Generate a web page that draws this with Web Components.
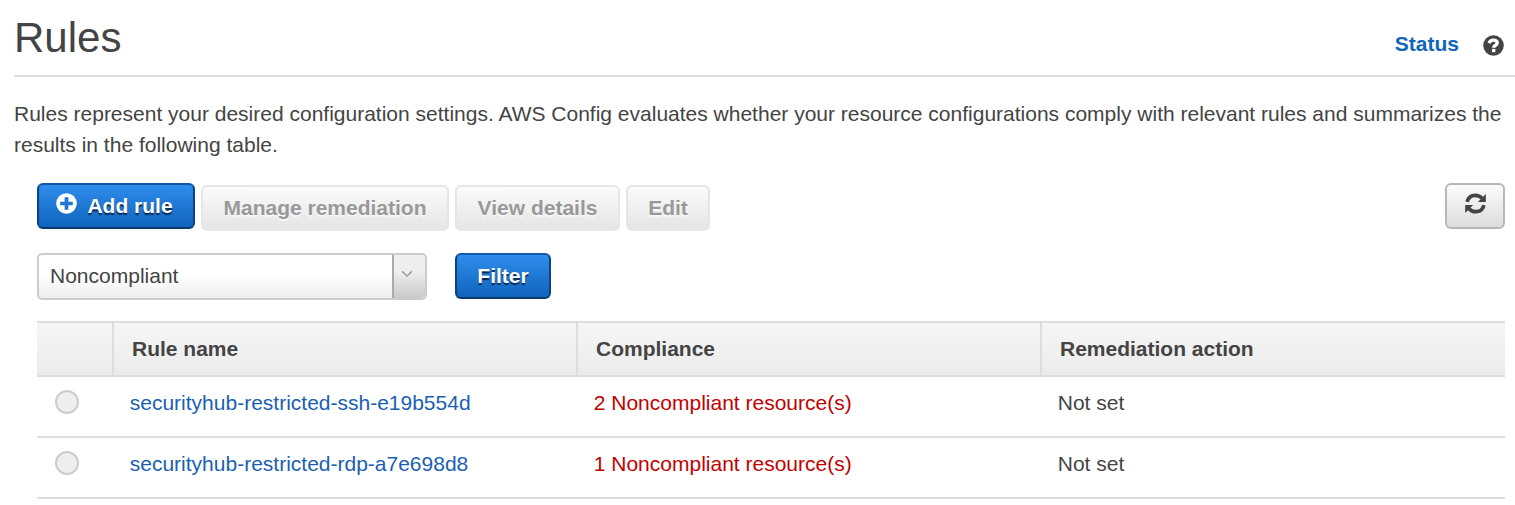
<!DOCTYPE html>
<html lang="en">
<head>
<meta charset="utf-8">
<title>Rules</title>
<style>
html,body{margin:0;background:#fff;overflow:hidden}
body{font:21px/31px "Liberation Sans",Arial,sans-serif;color:#444;height:505px}
</style>
</head>
<body>
<rules-page></rules-page>
<script>
const define = (name, html) => {
  const template = document.createElement('template');
  template.innerHTML = html;
  customElements.define(name, class extends HTMLElement {
    constructor() {
      super();
      this.attachShadow({mode: 'open'}).append(template.content.cloneNode(true));
    }
  });
};

define('page-header', `<style>
:host{display:flex;box-sizing:border-box;height:77px;margin-left:14px;border-bottom:2px solid #ddd;justify-content:space-between}
h1{margin:0;font-size:42px;font-weight:400;line-height:48px;padding-top:14px}
.side{display:flex;padding:28px 11px 0 0;gap:24px}
a{font-weight:700;color:#1166bb}
svg{display:block;margin-top:7px}
</style>
<h1><slot></slot></h1>
<div class="side"><a>Status</a>
<svg width="21" height="21" viewBox="0 0 21 21"><circle cx="10.5" cy="10.5" r="10.3" fill="#444"/><path d="M6 8.1C6.8 6.1 8.2 5.1 10.3 5.1c2.3 0 3.9 1.1 3.9 2.8 0 2.4-3.5 2.3-3.5 4.9" fill="none" stroke="#fff" stroke-width="3.4"/><rect x="9" y="13.9" width="3.4" height="3.3" fill="#fff"/></svg></div>`);

define('aws-button', `<style>
:host{display:block}
button{box-sizing:border-box;display:flex;align-items:flex-start;justify-content:center;width:100%;height:46px;margin:0;padding:7px 0 0;border:2px solid #e6e6e6;border-radius:6px;background:linear-gradient(#fbfbfb,#e5e5e5);color:#999;font:700 21px/28px "Liberation Sans",Arial,sans-serif;text-shadow:0 2px 1px #f8f8f8;white-space:nowrap}
:host([kind=primary]) button{border-color:#1159a6 #0a437f #083a70;background:linear-gradient(#2f8cec,#1064bc);color:#fff;text-shadow:0 2px 1px #06294f}
:host([kind=icon]) button{border-color:#b7b7b7;background:linear-gradient(#fbfbfb,#ddd);color:#444}
</style><button><slot></slot></button>`);

define('plus-icon', `<style>:host{display:block;width:21px;height:21px;margin:1px 10px 0 -3px}svg{display:block}</style>
<svg width="21" height="21" viewBox="0 0 21 21"><circle cx="10.5" cy="10.5" r="10.3" fill="#fff"/><path d="M10.5 4.2v12.6M4.2 10.5h12.6" stroke="#1d76d2" stroke-width="3.7"/></svg>`);

define('refresh-icon', `<style>:host{display:block;margin-top:1px}svg{display:block}</style>
<svg width="21" height="21" viewBox="0 0 21 21"><path d="M2.1 8.9C3.1 4.7 6.2 2.3 10.3 2.3c2.8 0 4.9 1 6.7 3" fill="none" stroke="#444" stroke-width="3.7"/><path d="M20.8 1v7.9h-7.9z" fill="#444"/><path d="M18.9 12.1c-1 4.2-4.1 6.6-8.2 6.6-2.8 0-4.9-1-6.7-3" fill="none" stroke="#444" stroke-width="3.7"/><path d="M.2 20v-7.9h7.9z" fill="#444"/></svg>`);

define('aws-select', `<style>
:host{display:flex;box-sizing:border-box;width:390px;height:47px;border:2px solid #ccc;border-radius:5px;background:linear-gradient(#fff 50%,#ececec);overflow:hidden}
span{flex:1;padding:5px 0 0 11px}
i{box-sizing:border-box;width:33px;border-left:2px solid #aaa;border-radius:0 4px 4px 0;background:linear-gradient(#eee 40%,#c8c8c8)}
svg{display:block;margin:15px 0 0 7px}
</style><span><slot></slot></span><i><svg width="12" height="8" viewBox="0 0 12 8"><path d="M1 1.3l5 4.7 5-4.7" fill="none" stroke="#999" stroke-width="1.5"/></svg></i>`);

define('rule-header', `<style>
:host{display:grid;grid-template-columns:75px 464px 464px 1fr;box-sizing:border-box;height:56px;border:solid #ddd;border-width:2px 0;background:linear-gradient(#f6f6f6,#ebebeb);font-weight:700}
div{padding:10px 0 0 18px;border-left:2px solid #ddd}
div:first-of-type{border:0}
</style><div></div><div>Rule name</div><div>Compliance</div><div>Remediation action</div>`);

define('rule-row', `<style>
:host{display:grid;grid-template-columns:75px 464px 464px 1fr;box-sizing:border-box;height:61px;border-bottom:2px solid #ddd;line-height:28px}
div{padding:12px 0 0 17.75px}
i{display:block;box-sizing:border-box;width:24px;height:24px;margin-top:1px;border:2px solid #ccc;border-radius:50%;background:#eee}
.name{color:#1a5fb4}.state{color:#c40000}
</style><div><i></i></div><div class="name"><slot name="name"></slot></div><div class="state"><slot name="state"></slot></div><div><slot name="action"></slot></div>`);

define('rules-page', `<style>
:host{display:block}
p{margin:21px 0 0 14px;white-space:nowrap}
.bar{display:flex;gap:6px;margin:23px 10px 0 37px}
.low{margin-top:2px}
.end{margin-left:auto}
.filter{display:flex;gap:28px;margin:22px 0 0 37px}
.table{margin:21px 10px 0 37px}
</style>
<page-header>Rules</page-header>
<p>Rules represent your desired configuration settings. AWS Config evaluates whether your resource configurations comply with relevant rules and summarizes the<br>results in the following table.</p>
<div class="bar">
<aws-button kind="primary" style="width:158px"><plus-icon></plus-icon>Add rule</aws-button>
<aws-button class="low" style="width:248px">Manage remediation</aws-button>
<aws-button class="low" style="width:165px">View details</aws-button>
<aws-button class="low" style="width:84px">Edit</aws-button>
<aws-button class="end" kind="icon" style="width:60px"><refresh-icon></refresh-icon></aws-button>
</div>
<div class="filter"><aws-select>Noncompliant</aws-select><aws-button kind="primary" style="width:96px">Filter</aws-button></div>
<div class="table">
<rule-header></rule-header>
<rule-row><span slot="name">securityhub-restricted-ssh-e19b554d</span><span slot="state">2 Noncompliant resource(s)</span><span slot="action">Not set</span></rule-row>
<rule-row><span slot="name">securityhub-restricted-rdp-a7e698d8</span><span slot="state">1 Noncompliant resource(s)</span><span slot="action">Not set</span></rule-row>
</div>`);
</script>
</body>
</html>
